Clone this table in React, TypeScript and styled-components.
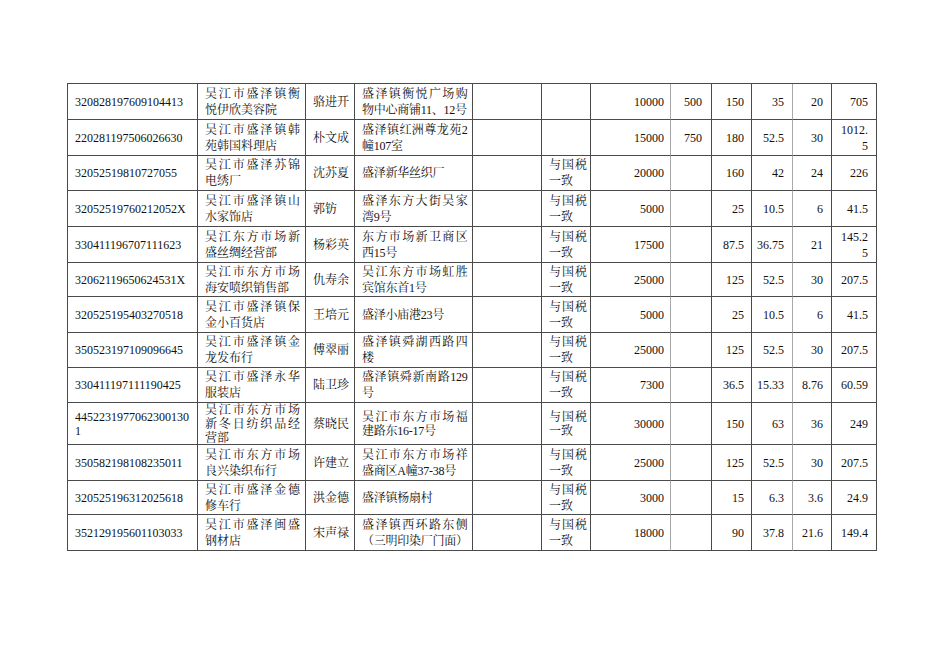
import React from "react";
import styled, { createGlobalStyle } from "styled-components";

const Global = createGlobalStyle`
  html, body { margin: 0; padding: 0; background: #ffffff; }
  body {
    font-family: "Liberation Serif", "Noto Serif CJK SC", "Noto Sans CJK SC", serif;
    color: #111;
  }
`;

type Col = {
  w: number;
  align: "justify" | "right";
  soft?: boolean;
  pl: number;
  pr: number;
  ls?: number;
  breakAll?: boolean;
};

const COLS: Col[] = [
  { w: 130, align: "justify", pl: 7, pr: 3, breakAll: true },
  { w: 108, align: "justify", pl: 7, pr: 5 },
  { w: 49, align: "justify", pl: 7, pr: 2 },
  { w: 118, align: "justify", pl: 7, pr: 4.5, ls: -0.25 },
  { w: 69, align: "justify", pl: 7, pr: 3 },
  { w: 49, align: "justify", pl: 7, pr: 3 },
  { w: 80, align: "right", pl: 7, pr: 6, soft: true },
  { w: 41, align: "right", pl: 4, pr: 9 },
  { w: 40, align: "right", pl: 4, pr: 7 },
  { w: 41, align: "right", pl: 4, pr: 8, soft: true },
  { w: 39, align: "right", pl: 4, pr: 8 },
  { w: 45, align: "right", pl: 7, pr: 8, breakAll: true },
];

const DATA: { h: number; tight?: boolean; cells: string[] }[] = [
  { h: 36, cells: ["320828197609104413", "吴江市盛泽镇衡悦伊欣美容院", "骆进开", "盛泽镇衡悦广场购物中心商铺11、12号", "", "", "10000", "500", "150", "35", "20", "705"] },
  { h: 36, cells: ["220281197506026630", "吴江市盛泽镇韩苑韩国料理店", "朴文成", "盛泽镇红洲尊龙苑2幢107室", "", "", "15000", "750", "180", "52.5", "30", "1012.5"] },
  { h: 35, cells: ["32052519810727055", "吴江市盛泽苏锦电绣厂", "沈苏夏", "盛泽新华丝织厂", "", "与国税一致", "20000", "", "160", "42", "24", "226"] },
  { h: 36, cells: ["32052519760212052X", "吴江市盛泽镇山水家饰店", "郭钫", "盛泽东方大街吴家湾9号", "", "与国税一致", "5000", "", "25", "10.5", "6", "41.5"] },
  { h: 36, cells: ["330411196707111623", "吴江东方市场新盛丝绸经营部", "杨彩英", "东方市场新卫商区西15号", "", "与国税一致", "17500", "", "87.5", "36.75", "21", "145.25"] },
  { h: 34, cells: ["32062119650624531X", "吴江市东方市场海安喷织销售部", "仇寿余", "吴江东方市场虹胜宾馆东首1号", "", "与国税一致", "25000", "", "125", "52.5", "30", "207.5"] },
  { h: 36, cells: ["320525195403270518", "吴江市盛泽镇保金小百货店", "王培元", "盛泽小庙港23号", "", "与国税一致", "5000", "", "25", "10.5", "6", "41.5"] },
  { h: 35, cells: ["350523197109096645", "吴江市盛泽镇金龙发布行", "傅翠丽", "盛泽镇舜湖西路四楼", "", "与国税一致", "25000", "", "125", "52.5", "30", "207.5"] },
  { h: 35, cells: ["330411197111190425", "吴江市盛泽永华服装店", "陆卫珍", "盛泽镇舜新南路129号", "", "与国税一致", "7300", "", "36.5", "15.33", "8.76", "60.59"] },
  { h: 42, tight: true, cells: ["44522319770623001301", "吴江市东方市场新冬日纺织品经营部", "蔡晓民", "吴江市东方市场福建路东16-17号", "", "与国税一致", "30000", "", "150", "63", "36", "249"] },
  { h: 36, cells: ["350582198108235011", "吴江市东方市场良兴染织布行", "许建立", "吴江市东方市场祥盛商区A幢37-38号", "", "与国税一致", "25000", "", "125", "52.5", "30", "207.5"] },
  { h: 34, cells: ["320525196312025618", "吴江市盛泽金德修车行", "洪金德", "盛泽镇杨扇村", "", "与国税一致", "3000", "", "15", "6.3", "3.6", "24.9"] },
  { h: 36, cells: ["352129195601103033", "吴江市盛泽闽盛钢材店", "宋声禄", "盛泽镇西环路东侧（三明印染厂门面）", "", "与国税一致", "18000", "", "90", "37.8", "21.6", "149.4"] },
];

const Page = styled.div`
  padding: 83px 0 0 67px;
  min-height: 672px;
  box-sizing: border-box;
`;

const Table = styled.div`
  display: inline-flex;
  flex-direction: column;
  border-top: 1px solid #4a4a4a;
  border-left: 1px solid #4a4a4a;
`;

const Row = styled.div<{ $h: number; $tight?: boolean }>`
  display: grid;
  grid-template-columns: ${COLS.map((c) => `${c.w}px`).join(" ")};
  height: ${(p) => p.$h}px;
  line-height: ${(p) => (p.$tight ? "14px" : "16px")};
`;

const Cell = styled.div<{ $col: Col }>`
  box-sizing: border-box;
  display: flex;
  flex-direction: column;
  justify-content: center;
  overflow: hidden;
  font-size: 12px;
  padding: 0 ${(p) => p.$col.pr}px 0 ${(p) => p.$col.pl}px;
  letter-spacing: ${(p) => p.$col.ls ?? 0}px;
  text-align: ${(p) => p.$col.align};
  word-break: ${(p) => (p.$col.breakAll ? "break-all" : "normal")};
  border-right: 1px solid ${(p) => (p.$col.soft ? "#a8a8a8" : "#4a4a4a")};
  border-bottom: 1px solid #4a4a4a;
`;

export default function App() {
  return (
    <>
      <Global />
      <Page>
        <Table>
          {DATA.map((r, i) => (
            <Row key={i} $h={r.h} $tight={r.tight}>
              {r.cells.map((t, j) => (
                <Cell key={j} $col={COLS[j]}>
                  {t}
                </Cell>
              ))}
            </Row>
          ))}
        </Table>
      </Page>
    </>
  );
}
